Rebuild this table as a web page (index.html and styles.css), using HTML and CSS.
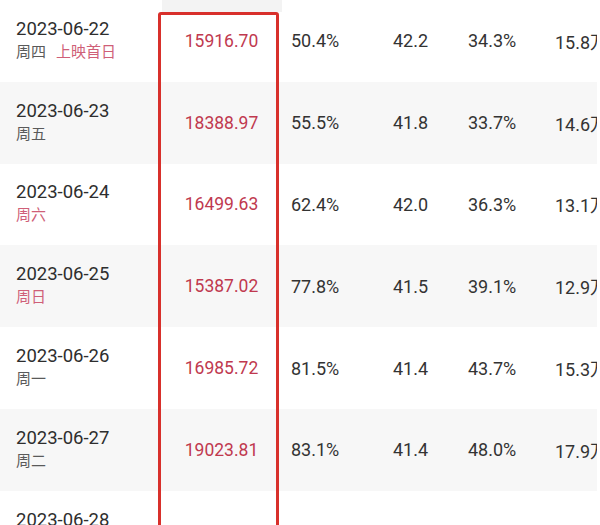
FILE: index.html
```html
<!DOCTYPE html>
<html lang="zh">
<head>
<meta charset="utf-8">
<link rel="stylesheet" href="styles.css">
</head>
<body>
<div class="table">
  <div class="row">
    <div class="cell c-date"><div class="date">2023-06-22</div><div class="wk">周四<span class="tag">上映首日</span></div></div>
    <div class="cell c-box">15916.70</div>
    <div class="cell c3">50.4%</div>
    <div class="cell c4">42.2</div>
    <div class="cell c5">34.3%</div>
    <div class="cell c6">15.8万</div>
  </div>
  <div class="row alt">
    <div class="cell c-date"><div class="date">2023-06-23</div><div class="wk">周五</div></div>
    <div class="cell c-box">18388.97</div>
    <div class="cell c3">55.5%</div>
    <div class="cell c4">41.8</div>
    <div class="cell c5">33.7%</div>
    <div class="cell c6">14.6万</div>
  </div>
  <div class="row">
    <div class="cell c-date"><div class="date">2023-06-24</div><div class="wk pink">周六</div></div>
    <div class="cell c-box">16499.63</div>
    <div class="cell c3">62.4%</div>
    <div class="cell c4">42.0</div>
    <div class="cell c5">36.3%</div>
    <div class="cell c6">13.1万</div>
  </div>
  <div class="row alt">
    <div class="cell c-date"><div class="date">2023-06-25</div><div class="wk pink">周日</div></div>
    <div class="cell c-box">15387.02</div>
    <div class="cell c3">77.8%</div>
    <div class="cell c4">41.5</div>
    <div class="cell c5">39.1%</div>
    <div class="cell c6">12.9万</div>
  </div>
  <div class="row">
    <div class="cell c-date"><div class="date">2023-06-26</div><div class="wk">周一</div></div>
    <div class="cell c-box">16985.72</div>
    <div class="cell c3">81.5%</div>
    <div class="cell c4">41.4</div>
    <div class="cell c5">43.7%</div>
    <div class="cell c6">15.3万</div>
  </div>
  <div class="row alt">
    <div class="cell c-date"><div class="date">2023-06-27</div><div class="wk">周二</div></div>
    <div class="cell c-box">19023.81</div>
    <div class="cell c3">83.1%</div>
    <div class="cell c4">41.4</div>
    <div class="cell c5">48.0%</div>
    <div class="cell c6">17.9万</div>
  </div>
  <div class="row">
    <div class="cell c-date"><div class="date">2023-06-28</div><div class="wk">周三</div></div>
    <div class="cell c-box"></div>
    <div class="cell c3"></div>
    <div class="cell c4"></div>
    <div class="cell c5"></div>
    <div class="cell c6"></div>
  </div>
  <div class="col-head"></div>
  <div class="mark"></div>
</div>
</body>
</html>
```
FILE: styles.css
```css
html, body {
  margin: 0;
  padding: 0;
  background: #ffffff;
}

.table {
  position: relative;
  width: 597px;
  height: 525px;
  overflow: hidden;
  font-family: Roboto, "Noto Sans CJK SC", sans-serif;
  color: #333333;
}

.row {
  display: grid;
  grid-template-columns: 158px 121px 102px 75px 87px 1fr;
  height: 81.8px;
  align-items: center;
  background: #ffffff;
}

.row.alt {
  background: #f7f7f7;
}

.cell {
  font-size: 18px;
  white-space: nowrap;
  padding-left: 12px;
}

.c-date {
  padding-left: 16px;
}

.date {
  font-size: 18.5px;
  line-height: 23px;
  color: #2e2e2e;
}

.wk {
  font-size: 15px;
  line-height: 23px;
  color: #5a5a5a;
}

.wk.pink,
.tag {
  color: #cf5f78;
}

.tag {
  margin-left: 10px;
}

.c-box {
  padding-left: 0;
  padding-right: 0;
  text-align: center;
  color: #c0394f;
  font-size: 17.5px;
  position: relative;
  left: 3px;
}

.col-head {
  position: absolute;
  left: 162px;
  top: 0;
  width: 120px;
  height: 12px;
  background: #f3f3f3;
}

.mark {
  position: absolute;
  left: 158px;
  top: 12px;
  width: 115px;
  height: 560px;
  border: 3px solid #d8302b;
  border-radius: 3px;
}
```
